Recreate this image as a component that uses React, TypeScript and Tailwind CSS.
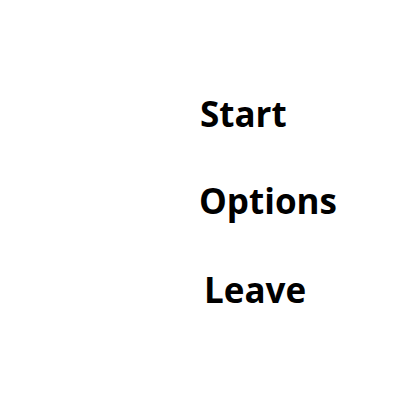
export default function App() {
  return (
    <div className="w-[400px] h-[400px] bg-white" style={{ fontFamily: '"Open Sans", sans-serif' }}>
      <div className="flex flex-col pt-[92px] text-[35px] font-bold text-black leading-[44px]">
        <div className="ml-[200px]">Start</div>
        <div className="ml-[199px] mt-[43px]">Options</div>
        <div className="ml-[204px] mt-[45px]">Leave</div>
      </div>
    </div>
  );
}
